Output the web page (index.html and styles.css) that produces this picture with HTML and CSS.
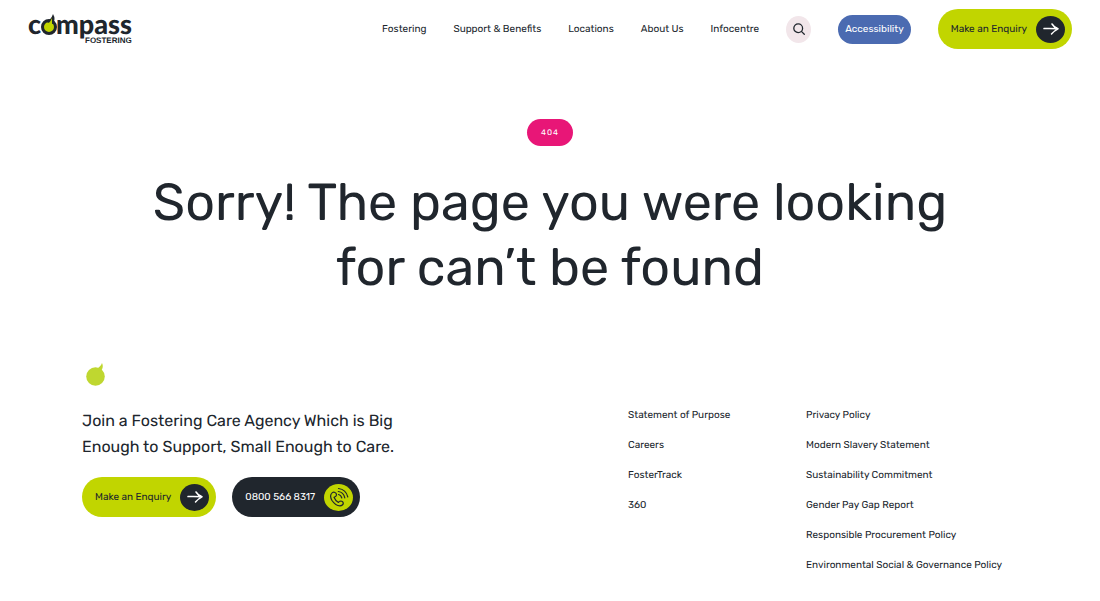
FILE: index.html
```html
<!DOCTYPE html>
<html lang="en">
<head>
<meta charset="utf-8">
<meta name="viewport" content="width=device-width, initial-scale=1">
<title>Page not found – Compass Fostering</title>
<link rel="stylesheet" href="styles.css">
</head>
<body>
<header class="header">
  <a class="logo" href="#" aria-label="Compass Fostering">
    <svg width="104" height="34" viewBox="0 0 104 34">
      <g class="logo-word">
        <text x="0" y="22">c</text>
        <text x="28" y="22">mpass</text>
      </g>
      <circle cx="21" cy="15" r="6.500" fill="#c1d500" stroke="#20262d" stroke-width="3"/>
      <path d="M18 10Q23 8 25 2Q28 7 25 12Z" fill="#20262d"/>
      <path d="M20 12Q23 9 24 6L24 13Z" fill="#c1d500"/>
      <text class="logo-sub" x="57" y="31">FOSTERING</text>
    </svg>
  </a>
  <nav class="nav" aria-label="Main">
    <a href="#">Fostering</a>
    <a href="#">Support &amp; Benefits</a>
    <a href="#">Locations</a>
    <a href="#">About Us</a>
    <a href="#">Infocentre</a>
    <button class="search" type="button" aria-label="Search">
      <svg width="12" height="12" viewBox="0 0 12 12" fill="none" stroke="#20262d" stroke-width="1.3" stroke-linecap="round"><circle cx="5.2" cy="5.2" r="4.4"/><path d="M8.4 8.4L11.3 11.2"/></svg>
    </button>
    <button class="access" type="button">Accessibility</button>
    <a class="pill" href="#">Make an Enquiry
      <span class="disc"><svg width="16" height="12" viewBox="0 0 16 12" fill="none" stroke="#fff" stroke-width="1.5" stroke-linecap="round" stroke-linejoin="round"><path d="M1 5.6Q7 5.2 15 5.8M9 1Q11 4.4 15 5.8Q11.500 7.500 8.500 11"/></svg></span>
    </a>
  </nav>
</header>
<main class="hero">
  <span class="code">404</span>
  <h1 class="title">Sorry! The page you were looking for can’t be found</h1>
</main>
<footer class="footer">
  <section class="join">
    <svg class="mark" width="20" height="23" viewBox="0 0 20 23" fill="#bfd730"><circle cx="9.500" cy="13.500" r="9.300"/><path d="M10 6Q14.500 4 16 0Q18 4 15 8Z"/></svg>
    <p class="tagline">Join a Fostering Care Agency Which is Big Enough to Support, Small Enough to Care.</p>
    <div class="actions">
      <a class="pill" href="#">Make an Enquiry
        <span class="disc"><svg width="16" height="12" viewBox="0 0 16 12" fill="none" stroke="#fff" stroke-width="1.5" stroke-linecap="round" stroke-linejoin="round"><path d="M1 5.6Q7 5.2 15 5.8M9 1Q11 4.4 15 5.8Q11.500 7.500 8.500 11"/></svg></span>
      </a>
      <a class="pill pill-dark" href="#">0800 566 8317
        <span class="disc disc-lime"><svg width="20" height="20" viewBox="0 0 20 20" fill="none" stroke="#20262d" stroke-width="1.2" stroke-linecap="round" stroke-linejoin="round"><path d="M6 5.500Q4 4.500 2.500 6.500Q0.500 9 3 13.500Q6.500 18.800 11 18.800Q14 18.500 14.300 16.300Q14 14 11.800 14Q10 14.200 9.500 15.500Q6.200 13.500 5 10.300Q7.300 9.600 7.500 8Q7.500 6 6 5.500Z"/><path d="M9.500 7.500Q12 8 12.800 11M9.300 4.500Q14.500 5 15.800 10.800M9.500 1.500Q17 2.300 18.800 10"/></svg></span>
      </a>
    </div>
  </section>
  <nav class="links" aria-label="Footer">
    <ul class="list">
      <li><a href="#">Statement of Purpose</a></li>
      <li><a href="#">Careers</a></li>
      <li><a href="#">FosterTrack</a></li>
      <li><a href="#">360</a></li>
    </ul>
    <ul class="list">
      <li><a href="#">Privacy Policy</a></li>
      <li><a href="#">Modern Slavery Statement</a></li>
      <li><a href="#">Sustainability Commitment</a></li>
      <li><a href="#">Gender Pay Gap Report</a></li>
      <li><a href="#">Responsible Procurement Policy</a></li>
      <li><a href="#">Environmental Social &amp; Governance Policy</a></li>
    </ul>
  </nav>
</footer>
</body>
</html>
```
FILE: styles.css
```css
* { box-sizing: border-box; }
body {
  margin: 0;
  background: #fff;
  color: #20262d;
  font: 400 10px/16px Rubik, Roboto, sans-serif;
  text-rendering: geometricPrecision;
}
a { color: inherit; text-decoration: none; }
button { border: 0; padding: 0; font: inherit; cursor: pointer; }
svg { display: block; flex: none; overflow: visible; }

.header {
  display: flex;
  align-items: center;
  justify-content: space-between;
  padding: 9px 28px;
}
.logo-word { font: 900 27px Lato, sans-serif; fill: #20262d; }
.logo-sub { font: 700 8px "Liberation Sans", sans-serif; fill: #20262d; }
.nav { display: flex; align-items: center; gap: 27px; white-space: nowrap; }
.search {
  display: grid;
  place-items: center;
  width: 25px;
  height: 27px;
  border-radius: 50%;
  background: #f2e6ea;
}
.access {
  padding: 6px 7px;
  border-radius: 15px;
  background: #4b6bb1;
  color: #fff;
  line-height: 17px;
}
.pill {
  display: flex;
  align-items: center;
  gap: 9px;
  height: 40px;
  padding: 0 7px 0 13px;
  border-radius: 20px;
  background: #c1d500;
}
.pill-dark { background: #20262d; color: #fff; }
.disc {
  display: grid;
  place-items: center;
  width: 29px;
  height: 27px;
  border-radius: 50%;
  background: #20262d;
}
.disc-lime { background: #c1d500; }

.hero {
  display: flex;
  flex-direction: column;
  align-items: center;
  padding: 61px 120px 0;
}
.code {
  padding: 6px 14px;
  border-radius: 14px;
  background: #e81677;
  color: #fff;
  font-size: 8px;
  line-height: 15px;
  letter-spacing: 1px;
}
.title {
  max-width: 860px;
  margin: 24px 0 0;
  font-size: 52px;
  font-weight: 400;
  line-height: 65px;
  text-align: center;
}

.footer {
  display: flex;
  justify-content: space-between;
  gap: 40px;
  padding: 63px 92px 30px 82px;
}
.join { width: 330px; }
.mark { margin-left: 4px; }
.tagline { margin: 22px 0 17px; font-size: 16px; line-height: 26px; }
.actions { display: flex; gap: 16px; white-space: nowrap; }
.links {
  display: grid;
  grid-template-columns: 178px 202px;
  padding-top: 44px;
  white-space: nowrap;
}
.list {
  display: flex;
  flex-direction: column;
  gap: 14px;
  margin: 0;
  padding: 0;
  list-style: none;
}
```
